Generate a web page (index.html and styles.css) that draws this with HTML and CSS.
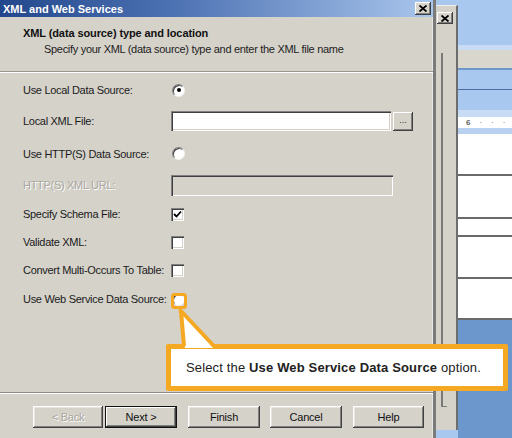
FILE: index.html
```html
<!DOCTYPE html>
<html lang="en">
<head>
<meta charset="utf-8">
<title>XML and Web Services</title>
<link rel="stylesheet" href="styles.css">
</head>
<body>
<div class="screen">
  <div class="dialog">
    <div class="titlebar">
      <span class="title">XML and Web Services</span>
      <span class="xbtn"><svg width="8" height="7" viewBox="0 0 8 7"><path d="M0.5 0.5 L7.5 6.5 M7.5 0.5 L0.5 6.5" stroke="#000" stroke-width="1.8"/></svg></span>
    </div>
    <div class="header">
      <div class="h-title">XML (data source) type and location</div>
      <div class="h-sub">Specify your XML (data source) type and enter the XML file name</div>
    </div>
    <div class="form">
      <span class="lbl">Use Local Data Source:</span>
      <span class="radio checked"></span>

      <span class="lbl">Local XML File:</span>
      <span class="filepick"><span class="field"></span><span class="browse">...</span></span>

      <span class="lbl">Use HTTP(S) Data Source:</span>
      <span class="radio"></span>

      <span class="lbl disabled">HTTP(S) XML URL:</span>
      <span class="field url"></span>

      <span class="lbl">Specify Schema File:</span>
      <span class="check"><svg width="9" height="9" viewBox="0 0 9 9"><path d="M1 4 L3.5 6.5 L8 1.5" fill="none" stroke="#000" stroke-width="1.8"/></svg></span>

      <span class="lbl">Validate XML:</span>
      <span class="check"></span>

      <span class="lbl">Convert Multi-Occurs To Table:</span>
      <span class="check"></span>

      <span class="lbl">Use Web Service Data Source:</span>
      <span class="radio"></span>
    </div>
    <div class="footer">
      <button class="btn" disabled>&lt; Back</button>
      <button class="btn default">Next &gt;</button>
      <button class="btn finish">Finish</button>
      <button class="btn cancel">Cancel</button>
      <button class="btn help">Help</button>
    </div>

    <!-- callout pointing at the web service option -->
    <div class="callout">Select the <b>Use Web Service Data Source</b> option.</div>
    <svg class="pointer" width="60" height="64" viewBox="0 0 60 64">
      <rect x="5.5" y="3.5" width="13" height="13" rx="2" fill="none" stroke="#f5a822" stroke-width="3"/>
      <line x1="13" y1="18" x2="13" y2="22" stroke="#f5a822" stroke-width="2.5"/>
      <polygon points="14,20 18,57 46,57" fill="#fff"/>
      <polyline points="17,55 14,20 46,54" fill="none" stroke="#f5a822" stroke-width="4" stroke-linejoin="round"/>
    </svg>
  </div>

  <div class="backwin">
    <span class="xbtn small"><svg width="8" height="7" viewBox="0 0 8 7"><path d="M0.5 0.5 L7.5 6.5 M7.5 0.5 L0.5 6.5" stroke="#000" stroke-width="1.8"/></svg></span>
    <span class="bw-bar"></span>
  </div>

  <div class="strip">
    <div class="band b-sky" style="height:45px"></div>
    <div class="band b-pale" style="height:5px"></div>
    <div class="band b-beige" style="height:18px"></div>
    <div class="band b-line" style="height:2px"></div>
    <div class="band b-sky" style="height:19px"></div>
    <div class="band b-dark" style="height:1px"></div>
    <div class="band b-sky" style="height:20px"></div>
    <div class="band b-pale" style="height:7px"></div>
    <div class="band b-ruler" style="height:11px"><span class="rg">6</span><span>·</span><span>·</span><span>·</span></div>
    <div class="band b-pale2" style="height:6px"></div>
    <div class="band b-white" style="height:40px"></div>
    <div class="band b-rule"></div>
    <div class="band b-white" style="height:41px"></div>
    <div class="band b-rule"></div>
    <div class="band b-white" style="height:16px"></div>
    <div class="band b-rule"></div>
    <div class="band b-white" style="height:40px"></div>
    <div class="band b-rule"></div>
    <div class="band b-white" style="height:39px"></div>
    <div class="band b-rule"></div>
    <div class="band b-blue"></div>
  </div>
</div>
</body>
</html>
```

FILE: styles.css
```css
* { box-sizing: border-box; }

html, body {
  margin: 0;
  padding: 0;
}

body {
  width: 512px;
  height: 438px;
  overflow: hidden;
  font-family: "Liberation Sans", Arial, sans-serif;
  font-size: 11px;
  color: #1b1b1b;
}

.screen {
  display: flex;
  height: 438px;
  background: #a9c8ef;
}

/* ---- dialog window ---- */
.dialog {
  position: relative;
  flex: none;
  width: 436px;
  height: 438px;
  background: #d5d2ca;
  display: flex;
  flex-direction: column;
  border-right: 3px solid #7b7b7b;
  box-shadow: inset -1px 0 #e8e6e0;
}

.titlebar {
  flex: none;
  height: 17px;
  display: flex;
  align-items: center;
  justify-content: space-between;
  padding: 0 2px 0 3px;
  background: linear-gradient(90deg, #23478c 0%, #4d72b3 40%, #a9c6ec 100%);
}

.title {
  color: #fff;
  font-weight: bold;
  font-size: 11px;
}

.xbtn {
  width: 16px;
  height: 13px;
  display: flex;
  align-items: center;
  justify-content: center;
  background: #d8d5cd;
  box-shadow: inset -1px -1px #404040, inset 1px 1px #fff, inset -2px -2px #808080;
}

.header {
  flex: none;
  height: 56px;
  padding: 10px 0 0 23px;
  border-bottom: 1px solid #fff;
  box-shadow: 0 -1px 0 #9a978f inset;
}

.h-title {
  font-weight: bold;
  line-height: 13px;
  color: #111;
  letter-spacing: -0.1px;
}

.h-sub {
  margin: 3px 0 0 21px;
  line-height: 13px;
  color: #222;
  letter-spacing: -0.3px;
}

/* ---- option grid ---- */
.form {
  flex: 1;
  display: grid;
  grid-template-columns: 148px auto;
  grid-template-rows: 30px 32px 33px 30px 28px 28px 28px 30px;
  align-items: center;
  justify-items: start;
  padding: 2px 0 0 23px;
}

.lbl {
  white-space: nowrap;
  letter-spacing: -0.3px;
}

.lbl.disabled {
  color: #a9a7a0;
  text-shadow: 1px 1px 0 #fff;
}

.radio {
  width: 13px;
  height: 13px;
  margin-left: 1px;
  border-radius: 50%;
  background: #fff;
  border: 1px solid;
  border-color: #7d7d7d #f2f2f2 #f2f2f2 #7d7d7d;
  box-shadow: inset 1px 1px 0 #404040;
  display: flex;
  align-items: center;
  justify-content: center;
}

.radio.checked::after {
  content: "";
  width: 4px;
  height: 4px;
  border-radius: 50%;
  background: #000;
}

.check {
  width: 13px;
  height: 13px;
  background: #fff;
  box-shadow: inset 1px 1px #808080, inset 2px 2px #404040, inset -1px -1px #fff, inset -2px -2px #d4d0c8;
  display: flex;
  align-items: center;
  justify-content: center;
}

.field {
  display: block;
  width: 220px;
  height: 20px;
  background: #fff;
  box-shadow: inset 1px 1px #808080, inset 2px 2px #404040, inset -1px -1px #fff, inset -2px -2px #d4d0c8;
}

.field.url {
  width: 222px;
  height: 21px;
  background: #d5d2ca;
}

.filepick {
  display: flex;
  align-items: center;
  gap: 2px;
}

.browse {
  width: 20px;
  height: 19px;
  background: #d5d2ca;
  box-shadow: inset -1px -1px #404040, inset 1px 1px #fff, inset -2px -2px #808080;
  font-size: 9px;
  line-height: 17px;
  text-align: center;
  color: #333;
}

/* ---- button row ---- */
.footer {
  flex: none;
  height: 46px;
  display: flex;
  align-items: flex-start;
  padding: 13px 0 0 33px;
  border-top: 1px solid #8f8c85;
  box-shadow: inset 0 1px 0 #fff;
}

.btn {
  width: 70px;
  height: 22px;
  padding: 0;
  border: none;
  background: #d5d2ca;
  font-family: inherit;
  font-size: 11px;
  letter-spacing: -0.2px;
  color: #111;
  box-shadow: inset -1px -1px #404040, inset 1px 1px #fff, inset -2px -2px #808080, inset 2px 2px #e6e4de;
}

.btn:disabled {
  color: #a9a7a0;
  text-shadow: 1px 1px 0 #fff;
}

.btn.default {
  width: 72px;
  margin-left: 2px;
  box-shadow: inset 0 0 0 1px #111, inset -2px -2px #404040, inset 2px 2px #fff, inset -3px -3px #808080;
}

.btn.finish { margin-left: 11px; width: 72px; }
.btn.cancel { margin-left: 10px; width: 72px; }
.btn.help { margin-left: 11px; width: 71px; }

/* ---- callout ---- */
.callout {
  position: absolute;
  left: 166px;
  top: 344px;
  width: 342px;
  height: 47px;
  background: #fff;
  border: 5px solid #f5a822;
  border-radius: 2px;
  padding-left: 15px;
  display: flex;
  align-items: center;
  font-size: 13px;
  letter-spacing: 0.15px;
  color: #222;
  white-space: pre;
}

.pointer {
  position: absolute;
  left: 167px;
  top: 291px;
}

/* ---- window behind the dialog ---- */
.backwin {
  flex: none;
  width: 22px;
  height: 425px;
  margin-top: 5px;
  background: #d5d2ca;
  border-right: 2px solid #6d6d6d;
  border-top: 1px solid #eee;
  display: flex;
  flex-direction: column;
  align-items: flex-start;
  padding: 6px 0 0 1px;
}

.xbtn.small {
  width: 16px;
  height: 12px;
}

.bw-bar {
  margin: 29px 0 0 4px;
  width: 6px;
  height: 354px;
  border-left: 2px solid #7a7a7a;
  border-bottom: 1px solid #7a7a7a;
}

/* ---- application behind, on the right ---- */
.strip {
  flex: 1;
  display: flex;
  flex-direction: column;
}

.band { flex: none; }
.b-sky { background: #a9c8ef; }
.b-pale { background: #c9dcf5; }
.b-pale2 { background: #b9d1f1; }
.b-beige { background: #d9d6cd; }
.b-line { background: #6f95cb; }
.b-dark { background: #4f6fa3; }
.b-white { background: #fff; }
.b-rule { height: 2px; background: #6a6a6a; }
.b-blue { flex: 1; background: #6c97cd; }

.b-ruler {
  background: #fff;
  display: flex;
  align-items: center;
  gap: 9px;
  padding-left: 8px;
  font-size: 8px;
  color: #555;
  line-height: 1;
}

.b-ruler .rg {
  font-weight: bold;
  color: #666;
}
```
